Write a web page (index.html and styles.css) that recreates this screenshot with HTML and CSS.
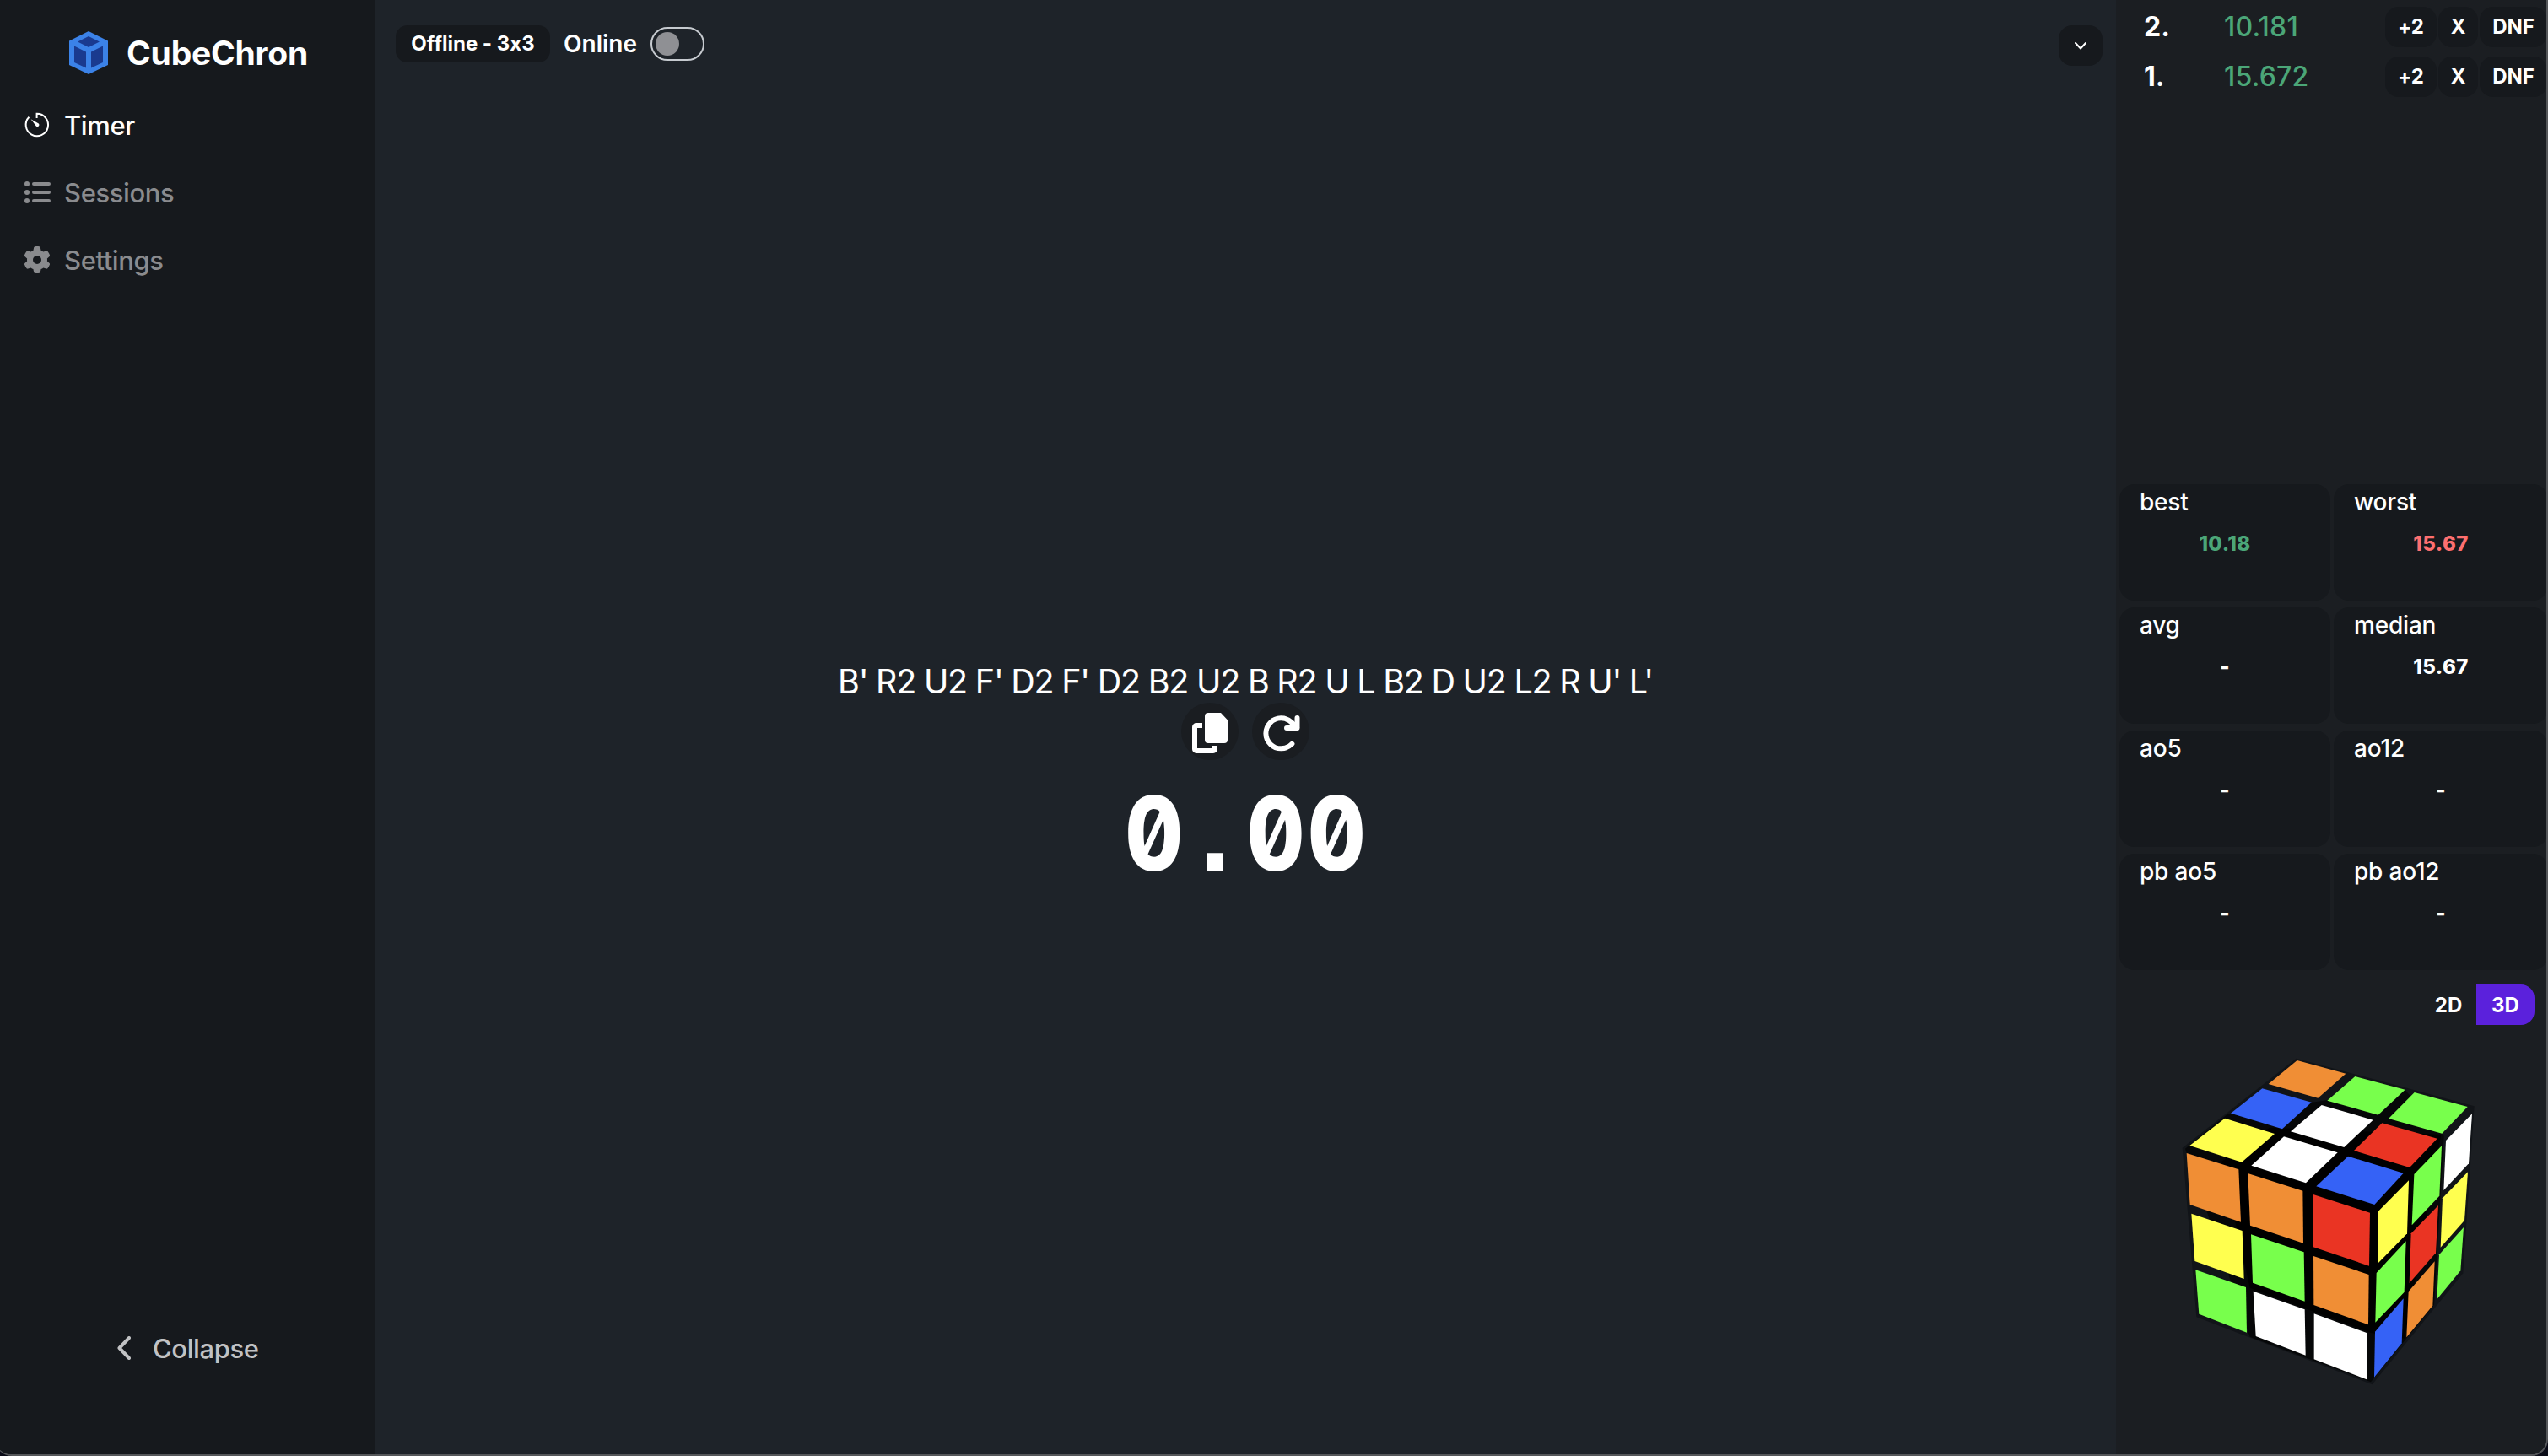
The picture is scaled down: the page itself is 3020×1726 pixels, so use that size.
FILE: index.html
```
<!DOCTYPE html>
<html lang="en">
<head>
<meta charset="utf-8">
<title>CubeChron</title>
<link rel="stylesheet" href="styles.css">
</head>
<body>
<div class="window">
  <aside class="sidebar">
    <div class="brand">
      <svg class="brand-logo" viewBox="0 0 46 51"><path fill="#3b82e8" d="M23 0 46 11.500V40L23 51 0 40V11.500Z"/><path fill="#1a3a8f" d="M23 6 36 12.500 23 19 10 12.500ZM6 17.500 20 24.500V43.500L6 37ZM40 17.500 26 24.500V43.500L40 37Z"/></svg>
      <span class="brand-name">CubeChron</span>
    </div>
    <nav class="nav">
      <a class="nav-item nav-item-active">
        <svg class="nav-icon" viewBox="0 0 32 32"><path d="M15.600 8V2.800a13.200 13.200 0 1 1-9.200 4" fill="none" stroke="currentColor" stroke-width="2"/><path d="M8.600 9.200 17.800 14.600a2.100 2.100 0 0 1-3 3Z" fill="currentColor"/></svg>
        <span class="nav-label">Timer</span>
      </a>
      <a class="nav-item">
        <svg class="nav-icon" viewBox="0 0 32 32"><g fill="currentColor"><circle cx="4" cy="6" r="3"/><circle cx="4" cy="16" r="3"/><circle cx="4" cy="26" r="3"/><rect x="10" y="4" width="22" height="4" rx="2"/><rect x="10" y="14" width="22" height="4" rx="2"/><rect x="10" y="24" width="22" height="4" rx="2"/></g></svg>
        <span class="nav-label">Sessions</span>
      </a>
      <a class="nav-item">
        <svg class="nav-icon" viewBox="0 0 512 512"><path fill="currentColor" d="M495.900 166.600c3.200 8.700.5 18.400-6.400 24.600l-43.300 39.400c1.100 8.300 1.700 16.800 1.700 25.400s-.6 17.100-1.700 25.400l43.300 39.400c6.900 6.200 9.600 15.900 6.400 24.600-4.400 11.900-9.700 23.300-15.800 34.300l-4.700 8.100c-6.600 11-14 21.400-22.100 31.200-5.900 7.200-15.700 9.600-24.500 6.800l-55.700-17.700c-13.400 10.300-28.200 18.900-44 25.400l-12.500 57.100c-2 9.100-9 16.300-18.200 17.800-13.800 2.300-28 3.500-42.500 3.500s-28.700-1.200-42.500-3.500c-9.200-1.500-16.200-8.700-18.200-17.800l-12.500-57.100c-15.800-6.500-30.600-15.100-44-25.400l-55.600 17.800c-8.800 2.800-18.600.3-24.500-6.800-8.100-9.800-15.500-20.200-22.100-31.200l-4.700-8.100c-6.100-11-11.400-22.400-15.800-34.300-3.200-8.700-.5-18.400 6.400-24.600l43.300-39.400C64.600 273.100 64 264.600 64 256s.6-17.100 1.700-25.400l-43.300-39.400c-6.900-6.200-9.600-15.900-6.400-24.600 4.400-11.900 9.700-23.300 15.800-34.300l4.700-8.100c6.600-11 14-21.400 22.100-31.200 5.900-7.200 15.700-9.600 24.500-6.800l55.700 17.700c13.400-10.300 28.200-18.900 44-25.400l12.500-57.100c2-9.100 9-16.300 18.200-17.800C227.300 1.200 241.500 0 256 0s28.700 1.200 42.500 3.500c9.200 1.500 16.200 8.700 18.200 17.800l12.500 57.100c15.800 6.500 30.600 15.100 44 25.400l55.700-17.700c8.800-2.800 18.600-.3 24.500 6.800 8.100 9.800 15.500 20.200 22.100 31.200l4.700 8.100c6.100 11 11.400 22.400 15.800 34.300zM256 336a80 80 0 1 0 0-160 80 80 0 1 0 0 160z"/></svg>
        <span class="nav-label">Settings</span>
      </a>
    </nav>
    <button class="collapse">
      <svg class="collapse-icon" viewBox="0 0 16 28"><path d="M14 2 2.500 14 14 26" fill="none" stroke="currentColor" stroke-width="4" stroke-linecap="round" stroke-linejoin="round"/></svg>
      <span class="nav-label">Collapse</span>
    </button>
  </aside>

  <main class="main">
    <header class="topbar">
      <span class="mode">Offline - 3x3</span>
      <span class="online">Online</span>
      <span class="toggle"><span class="toggle-knob"></span></span>
      <button class="menu-button"><svg class="menu-icon" viewBox="0 0 14 9"><path d="M1 1 7 7.500 13 1" fill="none" stroke="currentColor" stroke-width="2" stroke-linecap="round" stroke-linejoin="round"/></svg></button>
    </header>
    <section class="stage">
      <p class="scramble">B' R2 U2 F' D2 F' D2 B2 U2 B R2 U L B2 D U2 L2 R U' L'</p>
      <div class="actions">
        <button class="round"><svg class="round-icon" viewBox="0 0 48 48"><path d="M22 0H34L42 8.500V32a4 4 0 0 1-4 4H19a4 4 0 0 1-4-4V4a4 4 0 0 1 4-4Z" fill="currentColor" transform="translate(3)"/><path d="M15 12H8a5 5 0 0 0-5 5V43a5 5 0 0 0 5 5H28a5 5 0 0 0 5-5V39H27V42H9V18H15Z" fill="currentColor"/></svg></button>
        <button class="round"><svg class="round-icon" viewBox="0 0 48 48"><path d="M37.400 36.800A18 18 0 1 1 37 11.500L43 17.500" fill="none" stroke="currentColor" stroke-width="6" stroke-linecap="round"/><path d="M43.500 6V18H31" fill="none" stroke="currentColor" stroke-width="6" stroke-linecap="round" stroke-linejoin="round"/></svg></button>
      </div>
      <div class="clock"><span class="digit">0</span><span class="digit">.</span><span class="digit">0</span><span class="digit">0</span></div>
    </section>
  </main>

  <aside class="panel">
    <ol class="solves">
      <li class="solve"><span class="solve-no">2.</span><span class="solve-time">10.181</span><button class="chip chip-plus">+2</button><button class="chip chip-x">X</button><button class="chip chip-dnf">DNF</button></li>
      <li class="solve"><span class="solve-no">1.</span><span class="solve-time">15.672</span><button class="chip chip-plus">+2</button><button class="chip chip-x">X</button><button class="chip chip-dnf">DNF</button></li>
    </ol>
    <section class="stats">
      <div class="stat"><span class="stat-name">best</span><span class="stat-value good">10.18</span></div>
      <div class="stat"><span class="stat-name">worst</span><span class="stat-value bad">15.67</span></div>
      <div class="stat"><span class="stat-name">avg</span><span class="stat-value">-</span></div>
      <div class="stat"><span class="stat-name">median</span><span class="stat-value">15.67</span></div>
      <div class="stat"><span class="stat-name">ao5</span><span class="stat-value">-</span></div>
      <div class="stat"><span class="stat-name">ao12</span><span class="stat-value">-</span></div>
      <div class="stat"><span class="stat-name">pb ao5</span><span class="stat-value">-</span></div>
      <div class="stat"><span class="stat-name">pb ao12</span><span class="stat-value">-</span></div>
    </section>
    <div class="views">
      <button class="view">2D</button><button class="view view-active">3D</button>
    </div>
    <svg class="cube" viewBox="0 0 1200 1290">
      <path fill="#111418" d="M485 74 1118 244 1078 838 755 1234 130 994 80 392Z"/>
      <path fill="#060708" d="M240 272 870 184 1010 350 975 950 750 1225 320 1064 90 395Z"/>
      <path fill="#000" d="M390 320 1000 345 870 1070 750 1050 320 890 220 440Z"/>
      <g fill="#f08e35"><path d="M488 81 661 128 562 215 386 165Z"/><path d="M95 411 280 469 288 656 107 594Z"/><path d="M313 483 508 545 510 731 321 668Z"/><path d="M546 777 743 843 741 1021 547 951Z"/><path d="M977 796 970 953 877 1066 884 903Z"/></g>
      <g fill="#78ff4c"><path d="M694 138 872 185 776 275 595 224Z"/><path d="M905 195 1094 246 1003 341 813 288Z"/><path d="M1002 385 994 563 896 667 904 486Z"/><path d="M324 700 512 763 515 938 330 872Z"/><path d="M127 826 306 888 309 1049 139 983Z"/><path d="M875 724 869 905 766 1013 770 837Z"/><path d="M1080 675 1069 829 985 931 993 772Z"/></g>
      <g fill="#3562f6"><path d="M364 181 539 230 435 325 252 269Z"/><path d="M669 422 866 482 763 594 556 529Z"/><path d="M866 928 860 1087 762 1208 765 1046Z"/></g>
      <g fill="#fff"><path d="M575 240 758 293 655 390 465 334Z"/><path d="M441 352 632 409 519 517 325 455Z"/><path d="M1110 271 1098 448 1009 543 1017 366Z"/><path d="M332 902 515 967 518 1130 341 1062Z"/><path d="M548 982 737 1051 735 1216 548 1144Z"/></g>
      <g fill="#ffff4f"><path d="M231 287 408 342 291 443 106 384Z"/><path d="M112 626 293 687 299 858 124 795Z"/><path d="M885 508 879 697 774 804 777 617Z"/><path d="M1095 478 1083 650 998 746 1005 571Z"/></g>
      <g fill="#ea3423"><path d="M790 304 986 359 888 462 690 402Z"/><path d="M543 557 747 623 744 812 543 744Z"/><path d="M990 597 981 766 887 873 893 697Z"/></g>
    </svg>
  </aside>
</div>
</body>
</html>
```
FILE: styles.css
```
* { box-sizing: border-box; margin: 0; padding: 0; }
body {
  width: 3020px;
  height: 1726px;
  overflow: hidden;
  background: #0b0c18;
  color: #fff;
  font-family: Inter, "Liberation Sans", sans-serif;
  font-feature-settings: "calt" 0;
}
button { border: 0; background: none; color: inherit; font: inherit; font-feature-settings: inherit; letter-spacing: inherit; }
svg { display: block; flex: none; }

.window {
  display: flex;
  width: 3026px;
  height: 1726px;
  margin-left: -6px;
  padding-left: 6px;
  overflow: hidden;
  background: #1e2329;
  border-right: 2px solid #55575a;
  border-bottom: 2px solid #55575a;
  border-radius: 0 0 20px 20px;
}

.sidebar {
  display: flex;
  flex: none;
  flex-direction: column;
  width: 444px;
  background: #16191d;
}
.brand { display: flex; align-items: center; height: 108px; padding: 17px 0 0 82px; gap: 22px; }
.brand-logo { width: 46px; height: 51px; }
.brand-name { font-size: 39px; font-weight: 700; letter-spacing: -0.250px; }
.nav { display: flex; flex-direction: column; }
.nav-item {
  display: flex;
  align-items: center;
  gap: 16px;
  height: 80px;
  padding-left: 28px;
  color: #8a8b8e;
}
.nav-item-active { color: #fff; }
.nav-icon { width: 32px; height: 32px; }
.nav-label { font-size: 31px; font-weight: 450; letter-spacing: -0.400px; }
.collapse {
  display: flex;
  align-items: center;
  gap: 26px;
  height: 80px;
  margin-top: auto;
  margin-bottom: 86px;
  padding-left: 139px;
  color: #c1c2c4;
}
.collapse-icon { width: 16px; height: 28px; }

.main { display: flex; flex: none; flex-direction: column; width: 2064px; }
.topbar { display: flex; align-items: center; height: 104px; padding: 0 16px 0 25px; }
.mode {
  width: 183px;
  height: 44px;
  border-radius: 14px;
  background: #16191d;
  font-size: 24px;
  font-weight: 650;
  line-height: 44px;
  text-align: center;
}
.online { margin-left: 16px; font-size: 28px; font-weight: 600; }
.toggle {
  width: 64px;
  height: 40px;
  margin-left: 16px;
  padding: 4px;
  border: 2px solid #c6cacf;
  border-radius: 20px;
}
.toggle-knob { display: block; width: 28px; height: 28px; border-radius: 50%; background: #8f9094; }
.menu-button {
  display: flex;
  align-items: center;
  justify-content: center;
  width: 52px;
  height: 48px;
  margin-top: 4px;
  margin-left: auto;
  border-radius: 16px;
  background: #16191d;
}
.menu-icon { width: 14px; height: 9px; }

.stage { display: flex; flex-direction: column; align-items: center; padding-top: 679px; }
.scramble { height: 50px; font-size: 39.500px; line-height: 50px; letter-spacing: -1.250px; white-space: nowrap; }
.actions { display: flex; gap: 16px; }
.round {
  display: flex;
  align-items: center;
  justify-content: center;
  width: 68px;
  height: 68px;
  padding-top: 4px;
  border-radius: 50%;
  background: #1a1d21;
}
.round-icon { width: 48px; height: 48px; }
.clock {
  display: flex;
  justify-content: center;
  height: 174px;
  transform: scaleX(0.87);
  font-size: 122px;
  font-weight: 800;
  line-height: 174px;
  font-feature-settings: "zero" 1, "tnum" 1, "ss07" 1;
}
.digit { width: 83px; text-align: center; }

.panel { display: flex; flex: none; flex-direction: column; width: 510px; background: #1b1e22; overflow: hidden; }
.solves { height: 567px; padding: 2px 0 0 33px; list-style: none; }
.solve { display: flex; align-items: center; height: 59px; }
.solve-no { flex: none; width: 95px; font-size: 32px; font-weight: 700; }
.solve-time { flex: none; width: 191px; color: #4ba678; font-size: 32px; font-weight: 450; letter-spacing: 0.200px; }
.chip {
  flex: none;
  height: 48px;
  margin-right: 2px;
  border-radius: 16px;
  background: #16191d;
  font-size: 24px;
  font-weight: 650;
}
.chip-plus { width: 61px; }
.chip-x { width: 47px; }
.chip-dnf { width: 80px; }

.stats {
  display: grid;
  grid-template-columns: 250px 254px;
  grid-auto-rows: 138px;
  gap: 8px 4px;
  padding: 7px 0 0 4px;
}
.stat { display: flex; flex-direction: column; border-radius: 18px; background: #16191d; }
.stat-name { height: 42px; padding-left: 24px; font-size: 28px; font-weight: 550; line-height: 42px; letter-spacing: -0.200px; }
.stat-value { padding-top: 5px; font-size: 24px; font-weight: 800; line-height: 48px; letter-spacing: 0.400px; text-align: center; }
.good { color: #4ba678; }
.bad { color: #fd6f6f; }

.views { display: flex; justify-content: flex-end; margin-top: 17px; padding-right: 14px; }
.view { width: 66px; height: 48px; border-radius: 16px 0 0 16px; font-size: 24px; font-weight: 650; }
.view-active { width: 69px; border-radius: 0 16px 16px 0; background: #5b21dc; }
.cube { width: 400px; height: 430px; margin: 15px 0 0 52px; }
```
